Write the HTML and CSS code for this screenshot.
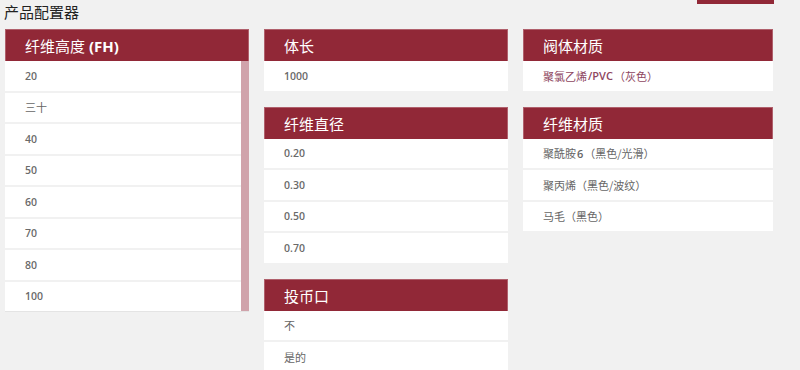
FILE: index.html
```html
<!DOCTYPE html>
<html lang="zh">
	<head>
		<meta charset="utf-8">
		<title>产品配置器</title>
		<link rel="stylesheet" href="styles.css">
	</head>

	<body>
		<div class="topbar">
			<h1 class="title">产品配置器</h1>
			<div class="tab"></div>
		</div>

		<div class="grid">
			<div class="column">
				<div class="block">
					<div class="head">纤维高度 <b>(FH)</b></div>
					<div class="scrollbox">
						<div class="list">
							<div class="item num">20</div>
							<div class="item">三十</div>
							<div class="item num">40</div>
							<div class="item num">50</div>
							<div class="item num">60</div>
							<div class="item num">70</div>
							<div class="item num">80</div>
							<div class="item num">100</div>
						</div>
						<div class="thumb"></div>
					</div>
				</div>
			</div>

			<div class="column">
				<div class="block">
					<div class="head">体长</div>
					<div class="list">
						<div class="item num">1000</div>
					</div>
				</div>
				<div class="block">
					<div class="head">纤维直径</div>
					<div class="list">
						<div class="item num">0.20</div>
						<div class="item num">0.30</div>
						<div class="item num">0.50</div>
						<div class="item num">0.70</div>
					</div>
				</div>
				<div class="block">
					<div class="head">投币口</div>
					<div class="list">
						<div class="item">不</div>
						<div class="item">是的</div>
					</div>
				</div>
			</div>

			<div class="column">
				<div class="block">
					<div class="head">阀体材质</div>
					<div class="list">
						<div class="item selected">聚氯乙烯<b>/PVC</b>（灰色）</div>
					</div>
				</div>
				<div class="block">
					<div class="head">纤维材质</div>
					<div class="list">
						<div class="item">聚酰胺 <b>6</b>（黑色/光滑）</div>
						<div class="item">聚丙烯（黑色/波纹）</div>
						<div class="item">马毛（黑色）</div>
					</div>
				</div>
			</div>
		</div>
	</body>
</html>
```

FILE: styles.css
```css
html {
	margin: 0;
	padding: 0;
	background: #f1f1f1;
}

body {
	margin: 0;
	padding: 0 0 0 5px;
	height: 370px;
	overflow: hidden;
	font-family: 'Open Sans', 'Noto Sans CJK SC', sans-serif;
}

.topbar {
	display: flex;
	flex-direction: row;
	justify-content: space-between;
	align-items: flex-start;
	height: 29px;
}

.title {
	margin: 1px 0 0 -1px;
	font-family: 'Noto Sans CJK SC', sans-serif;
	font-weight: 400;
	font-size: 15px;
	line-height: 22px;
	color: #222;
}

.tab {
	width: 77px;
	height: 4px;
	margin-right: 26px;
	background: #912837;
}

.grid {
	display: grid;
	grid-template-columns: 244px 244px 250px;
	column-gap: 15px;
	align-items: start;
}

.column {
	display: flex;
	flex-direction: column;
	gap: 16px;
}

.head {
	height: 32px;
	box-sizing: border-box;
	padding-left: 19px;
	display: flex;
	align-items: center;
	background: #912837;
	border: 1px solid #b0606c;
	border-bottom: none;
	color: #fff;
	font-family: 'Noto Sans CJK SC', sans-serif;
	font-size: 15px;
	font-weight: 400;
}

.head b {
	font-family: 'Open Sans', sans-serif;
	font-weight: 700;
	margin-left: 4px;
}

.list {
	display: flex;
	flex-direction: column;
	gap: 2px;
}

.item {
	height: 29.5px;
	display: flex;
	align-items: center;
	padding-left: 20px;
	background: #fff;
	color: #666;
	font-size: 11px;
	font-family: 'Noto Sans CJK SC', sans-serif;
}

.item.num {
	font-family: 'Open Sans', sans-serif;
	font-weight: 600;
	font-size: 10.5px;
	color: #6a6a6a;
}

.item b {
	font-family: 'Open Sans', sans-serif;
	font-weight: 600;
	margin: 0 1px;
}

.item.selected {
	color: #8e4660;
}

.scrollbox {
	display: flex;
	flex-direction: row;
	border-bottom: 1px solid #e4e4e4;
}

.scrollbox .list {
	flex: 1;
}

.thumb {
	width: 8px;
	background: #d0a3ab;
}
```
